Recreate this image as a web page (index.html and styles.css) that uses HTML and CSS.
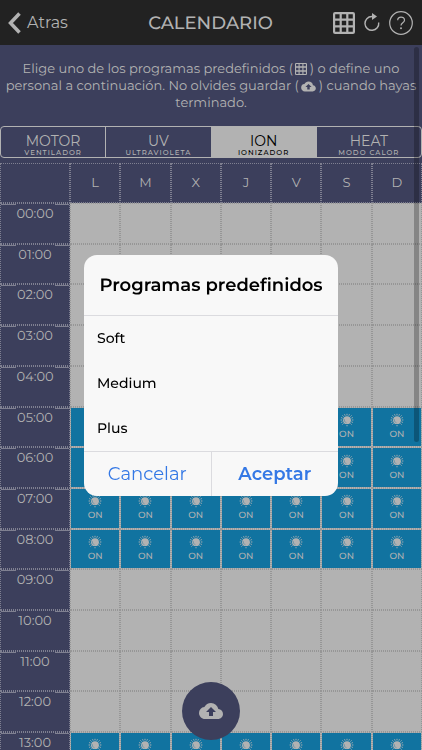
FILE: index.html
```html
<!DOCTYPE html>
<html lang="es">
<head>
  <meta charset="UTF-8">
  <meta name="viewport" content="width=device-width, initial-scale=1.0">
  <title>Calendario</title>
  <link rel="stylesheet" href="styles.css">
</head>
<body>

<svg class="defs" aria-hidden="true">
  <symbol id="icon-grid" viewBox="0 0 22 22">
    <path fill-rule="evenodd" fill="currentColor" d="M2 0h18a2 2 0 0 1 2 2v18a2 2 0 0 1-2 2H2a2 2 0 0 1-2-2V2a2 2 0 0 1 2-2zM2 2v4h4.500V2zM8.500 2v4h5V2zM15.500 2v4H20V2zM2 8.500v5h4.500v-5zM8.500 8.500v5h5v-5zM15.500 8.500v5H20v-5zM2 16v4h4.500v-4zM8.500 16v4h5v-4zM15.500 16v4H20v-4z"/>
  </symbol>
  <symbol id="icon-cloud" viewBox="0 0 24 18">
    <path fill="currentColor" fill-rule="evenodd" d="M19.350 7.040A7.490 7.490 0 0 0 12 1C9.110 1 6.600 2.640 5.350 5.040A5.994 5.994 0 0 0 0 11c0 3.310 2.690 6 6 6h13c2.760 0 5-2.240 5-5 0-2.640-2.050-4.780-4.650-4.960zM14 10v4h-4v-4H7l5-5 5 5h-3z"/>
  </symbol>
  <symbol id="icon-sun" viewBox="0 0 14 14">
    <circle cx="7" cy="7.200" r="3.900" fill="currentColor"/>
    <path stroke="currentColor" stroke-width=".9" stroke-linecap="round" fill="none" d="M7 1.200v.8M7 12.300v.6M1 7h.8M12.200 7h.8M2.700 2.700l.6.600M10.700 10.700l.6.600M2.700 11.300l.6-.6M10.700 3.300l.6-.6M4.700 1.600l.3.700M9.300 1.600l-.3.700M1.500 4.700l.7.300M12.500 4.700l-.7.300M1.500 9.300l.7-.3M12.500 9.300l-.7-.3"/>
    <path stroke="#1173a0" stroke-width=".4" fill="none" d="M4.400 6.200A3 3 0 0 0 6.500 9.800"/>
  </symbol>
</svg>

<header class="topbar">
  <button class="back">
    <svg width="13" height="22" viewBox="0 0 13 22"><path d="M11.500 1.500L2.500 11l9 9.500" fill="none" stroke="currentColor" stroke-width="3.500"/></svg>
    Atras
  </button>
  <h1 class="title">CALENDARIO</h1>
  <div class="tools">
    <button aria-label="Programas predefinidos">
      <svg width="22" height="22" viewBox="0 0 22 22" fill="none" stroke="currentColor" stroke-width="2.200"><rect x="1.100" y="1.100" width="19.800" height="19.800" rx="1"/><path d="M7.700 1v20M14.300 1v20M1 7.700h20M1 14.300h20"/></svg>
    </button>
    <button aria-label="Recargar">
      <svg width="16" height="20" viewBox="0 0 16 20"><path d="M14.700 9.500A6.900 6.900 0 1 1 7.800 3.500H10" fill="none" stroke="currentColor" stroke-width="1.400"/><path d="M8 0l5 3.500L8 7z" fill="currentColor"/></svg>
    </button>
    <button aria-label="Ayuda">
      <svg width="24" height="24" viewBox="0 0 24 24" fill="none" stroke="currentColor" stroke-width="1.200"><circle cx="12" cy="12" r="11.300"/><path d="M8.700 9.200c0-4.200 6.800-4.200 6.800 0 0 2.600-3.500 2.600-3.500 5.300"/><circle cx="12" cy="17.300" r=".4" fill="currentColor"/></svg>
    </button>
  </div>
</header>

<main class="content">
  <p class="intro">
    Elige uno de los programas predefinidos ( <svg width="12" height="12"><use href="#icon-grid"/></svg> ) o define uno<br>
    personal a continuación. No olvides guardar ( <svg width="15" height="11"><use href="#icon-cloud"/></svg> ) cuando hayas<br>
    terminado.
  </p>

  <nav class="tabs">
    <button class="tab">MOTOR<small>VENTILADOR</small></button>
    <button class="tab">UV<small>ULTRAVIOLETA</small></button>
    <button class="tab active">ION<small>IONIZADOR</small></button>
    <button class="tab">HEAT<small>MODO CALOR</small></button>
  </nav>

  <table class="calendar">
    <thead>
      <tr><th class="hour-col"></th><th>L</th><th>M</th><th>X</th><th>J</th><th>V</th><th>S</th><th>D</th></tr>
    </thead>
    <tbody id="hours"></tbody>
  </table>
  <div class="scroll-thumb"></div>
</main>

<button class="save" aria-label="Guardar"><svg width="24" height="18"><use href="#icon-cloud"/></svg></button>

<div class="overlay">
  <form class="dialog" role="dialog" aria-labelledby="dialog-title">
    <h2 id="dialog-title">Programas predefinidos</h2>
    <div class="options">
      <label><input type="radio" name="program" value="soft">Soft</label>
      <label><input type="radio" name="program" value="medium">Medium</label>
      <label><input type="radio" name="program" value="plus">Plus</label>
    </div>
    <div class="actions">
      <button type="button">Cancelar</button>
      <button type="button" class="accept">Aceptar</button>
    </div>
  </form>
</div>

<script>
const activeHours = [5, 6, 7, 8, 13];
const hours = document.getElementById('hours');

for (let h = 0; h < 24; h++) {
  const row = document.createElement('tr');
  const on = activeHours.includes(h);
  let cells = `<th class="hour">${String(h).padStart(2, '0')}:00</th>`;
  for (let d = 0; d < 7; d++) {
    cells += on
      ? '<td class="on"><svg width="14" height="14"><use href="#icon-sun"/></svg><span>ON</span></td>'
      : '<td></td>';
  }
  row.innerHTML = cells;
  hours.appendChild(row);
}
</script>

</body>
</html>
```
FILE: styles.css
```css
* {
  box-sizing: border-box;
}

body {
  margin: 0;
  height: 100vh;
  overflow: hidden;
  display: flex;
  flex-direction: column;
  font-family: Montserrat, Inter, sans-serif;
  text-rendering: geometricPrecision;
  background-color: #3c3f5c;
  color: #b2b2b2;
}

button {
  font: inherit;
  color: inherit;
  background: none;
  border: none;
  padding: 0;
}

svg {
  display: block;
}

.defs {
  position: absolute;
  width: 0;
  height: 0;
}

/* top bar */
.topbar {
  flex: none;
  height: 45px;
  padding: 0 9px 0 8px;
  display: grid;
  grid-template-columns: 1fr auto 1fr;
  align-items: center;
  background-color: #222;
}

.back {
  display: flex;
  align-items: center;
  gap: 6px;
  font-size: 16px;
}

.title {
  margin: 0;
  font-size: 18px;
  font-weight: 500;
}

.tools {
  display: flex;
  justify-content: flex-end;
  align-items: center;
  gap: 9px;
}

/* content */
.content {
  position: relative;
  flex: 1;
  min-height: 0;
  overflow: hidden;
}

.intro {
  margin: 0;
  padding: 16px 0 14px;
  font-size: 13px;
  line-height: 17px;
  text-align: center;
  white-space: nowrap;
}

.intro svg {
  display: inline-block;
  margin: 0 -1px;
  vertical-align: -2px;
}

.tabs {
  display: flex;
  height: 32px;
  margin-bottom: 5px;
  border: 1px solid #b2b2b2;
  border-radius: 4px;
  overflow: hidden;
}

.tab {
  flex: 1;
  padding-top: 7px;
  font-size: 14px;
  line-height: 14px;
}

.tab + .tab {
  border-left: 1px solid #b2b2b2;
}

.tab small {
  display: block;
  font-size: 7px;
  font-weight: 500;
  line-height: 9px;
  letter-spacing: 1px;
}

.tab.active {
  background-color: #b2b2b2;
  color: #000;
}

/* calendar */
.calendar {
  width: 100%;
  height: 1017px;
  table-layout: fixed;
  border-collapse: separate;
  border-spacing: 0;
  background-color: #b2b2b2;
}

.calendar tr {
  height: 40px;
}

.calendar th,
.calendar td {
  padding: 0;
  border: 1px dotted #969696;
  text-align: center;
}

.calendar th {
  background-color: #3c3f5c;
  border-color: #7f8091;
  font-size: 13px;
  font-weight: 400;
}

.calendar .hour-col {
  width: 70px;
}

.calendar .hour {
  padding-top: 2px;
  vertical-align: top;
  line-height: 17px;
  /* short solid rules on both sides of the hour */
  background-image: linear-gradient(90deg, #7f8091 15px, transparent 15px, transparent 54px, #7f8091 54px);
  background-size: 100% 1px;
  background-repeat: no-repeat;
}

.calendar .on {
  padding-bottom: 1px;
  border-color: #9b9b9b;
  background-color: #1173a0;
  background-clip: padding-box;
  font-size: 9px;
  font-weight: 500;
  line-height: 10px;
}

.on svg {
  margin: 0 auto 3px;
}

.on span {
  display: block;
}

.scroll-thumb {
  position: absolute;
  top: 2px;
  right: 3px;
  width: 5px;
  height: 395px;
  border-radius: 3px;
  background-color: rgba(0, 0, 0, 0.25);
}

.save {
  position: fixed;
  left: 50%;
  bottom: 10px;
  transform: translateX(-50%);
  width: 58px;
  height: 58px;
  border-radius: 50%;
  display: flex;
  align-items: center;
  justify-content: center;
  background-color: #3c3f5c;
}

/* dialog */
.overlay {
  position: fixed;
  inset: 0;
  display: flex;
  align-items: center;
  justify-content: center;
}

.dialog {
  width: 60%;
  min-width: 254px;
  border-radius: 13px;
  overflow: hidden;
  background-color: #f8f8f8;
  color: #000;
}

.dialog h2 {
  margin: 0;
  padding: 19px 0;
  border-bottom: 1px solid #dbdbdf;
  font-size: 18px;
  line-height: 22px;
  font-weight: 600;
  text-align: center;
  white-space: nowrap;
}

.options label {
  display: block;
  padding-left: 13px;
  font-size: 14px;
  font-weight: 500;
  line-height: 45px;
}

.options input {
  appearance: none;
  position: absolute;
  margin: 0;
}

.actions {
  display: flex;
  border-top: 1px solid #dbdbdf;
}

.actions button {
  flex: 1;
  height: 44px;
  font-size: 18px;
  color: #3478e5;
}

.actions .accept {
  border-left: 1px solid #dbdbdf;
  font-weight: 600;
}
```
